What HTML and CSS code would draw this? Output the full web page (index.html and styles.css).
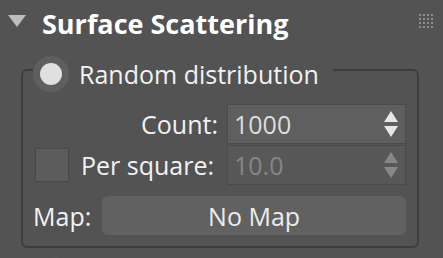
FILE: index.html
```html
<!DOCTYPE html>
<html lang="en">
<head>
  <meta charset="UTF-8">
  <title>Surface Scattering</title>
  <link rel="stylesheet" href="styles.css">
</head>
<body>
  <div class="rollout">
    <div class="rollout-head">
      <svg class="caret" width="18" height="12" viewBox="0 0 18 12"><path d="M0 0 H18 L9 12 Z" fill="#bdbdbd"/></svg>
      <span class="title">Surface Scattering</span>
      <svg class="grip" width="14" height="14" viewBox="0 0 14 14" fill="#8e8e8e">
        <rect x="0" y="0" width="2" height="2"/><rect x="4" y="0" width="2" height="2"/><rect x="8" y="0" width="2" height="2"/><rect x="12" y="0" width="2" height="2"/>
        <rect x="0" y="4" width="2" height="2"/><rect x="4" y="4" width="2" height="2"/><rect x="8" y="4" width="2" height="2"/><rect x="12" y="4" width="2" height="2"/>
        <rect x="0" y="8" width="2" height="2"/><rect x="4" y="8" width="2" height="2"/><rect x="8" y="8" width="2" height="2"/><rect x="12" y="8" width="2" height="2"/>
        <rect x="0" y="12" width="2" height="2"/><rect x="4" y="12" width="2" height="2"/><rect x="8" y="12" width="2" height="2"/><rect x="12" y="12" width="2" height="2"/>
      </svg>
    </div>

    <fieldset class="group">
      <legend class="group-legend">
        <span class="radio"><span class="radio-dot"></span></span>
        <span class="label">Random distribution</span>
      </legend>

      <div class="row first">
        <span class="label grow right">Count:</span>
        <div class="spinner">
          <span class="value">1000</span>
          <svg width="14" height="26" viewBox="0 0 14 26"><path d="M7 0 L14 11 H0 Z M0 15 H14 L7 26 Z" fill="#e6e6e6"/></svg>
        </div>
      </div>

      <div class="row">
        <span class="checkbox"></span>
        <span class="label grow">Per square:</span>
        <div class="spinner disabled">
          <span class="value">10.0</span>
          <svg width="14" height="26" viewBox="0 0 14 26"><path d="M7 0 L14 11 H0 Z M0 15 H14 L7 26 Z" fill="#878787"/></svg>
        </div>
      </div>

      <div class="row map-row">
        <span class="label">Map:</span>
        <button class="map-button">No Map</button>
      </div>
    </fieldset>

    <div class="next-radio"></div>
  </div>
</body>
</html>
```

FILE: styles.css
```css
* {
  margin: 0;
  padding: 0;
  box-sizing: border-box;
}
body {
  background-color: #535353;
  font-family: "Open Sans", "Noto Sans", sans-serif;
  color: #f2f2f2;
  overflow: hidden;
}
.rollout {
  width: 443px;
  height: 258px;
  overflow: hidden;
}
.rollout-head {
  display: flex;
  align-items: center;
  height: 44px;
  padding: 2px 10px 0 8px;
  margin-bottom: 4px;
}
.caret {
  margin-top: -4px;
}
.title {
  flex: 1;
  margin-left: 16px;
  font-weight: 700;
  font-size: 27px;
  color: #ffffff;
}
.grip {
  margin-top: -4px;
}
.group {
  margin: 0 24px 0 21px;
  padding: 0 11px 11px 10px;
  border: 2px solid #3d3d3d;
  border-radius: 6px;
}
.group-legend {
  display: flex;
  align-items: center;
  padding: 8px 14px 0 0;
}
.label {
  font-size: 25px;
  line-height: 30px;
  white-space: nowrap;
}
.radio {
  display: flex;
  align-items: center;
  justify-content: center;
  width: 36px;
  height: 36px;
  border-radius: 50%;
  background-color: #5f5f5f;
  margin-right: 10px;
}
.radio-dot {
  width: 22px;
  height: 22px;
  border-radius: 50%;
  background-color: #e0e0e0;
}
.row {
  display: flex;
  align-items: center;
  margin-top: 1px;
}
.row.first {
  margin-top: 12px;
}
.grow {
  flex: 1;
}
.right {
  text-align: right;
  padding-right: 9px;
}
.checkbox {
  width: 34px;
  height: 34px;
  margin: 0 12px 0 2px;
  background-color: #5c5c5c;
  border: 1px solid #484848;
}
.spinner {
  display: flex;
  align-items: center;
  justify-content: space-between;
  width: 179px;
  height: 40px;
  padding: 0 7px 0 6px;
  background-color: #5f5f5f;
  border: 1px solid #4a4a4a;
}
.spinner .value {
  font-size: 25px;
  color: #dedede;
}
.spinner.disabled {
  background-color: #585858;
}
.spinner.disabled .value {
  color: #878787;
}
.map-row {
  margin-top: 11px;
}
.map-button {
  flex: 1;
  height: 39px;
  margin-left: 11px;
  border: none;
  border-radius: 6px;
  background-color: #616161;
  color: #ececec;
  font-family: inherit;
  font-size: 25px;
}
.next-radio {
  width: 18px;
  height: 18px;
  margin: 9px 0 0 46px;
  border-radius: 50%;
  background-color: #585858;
}
```
